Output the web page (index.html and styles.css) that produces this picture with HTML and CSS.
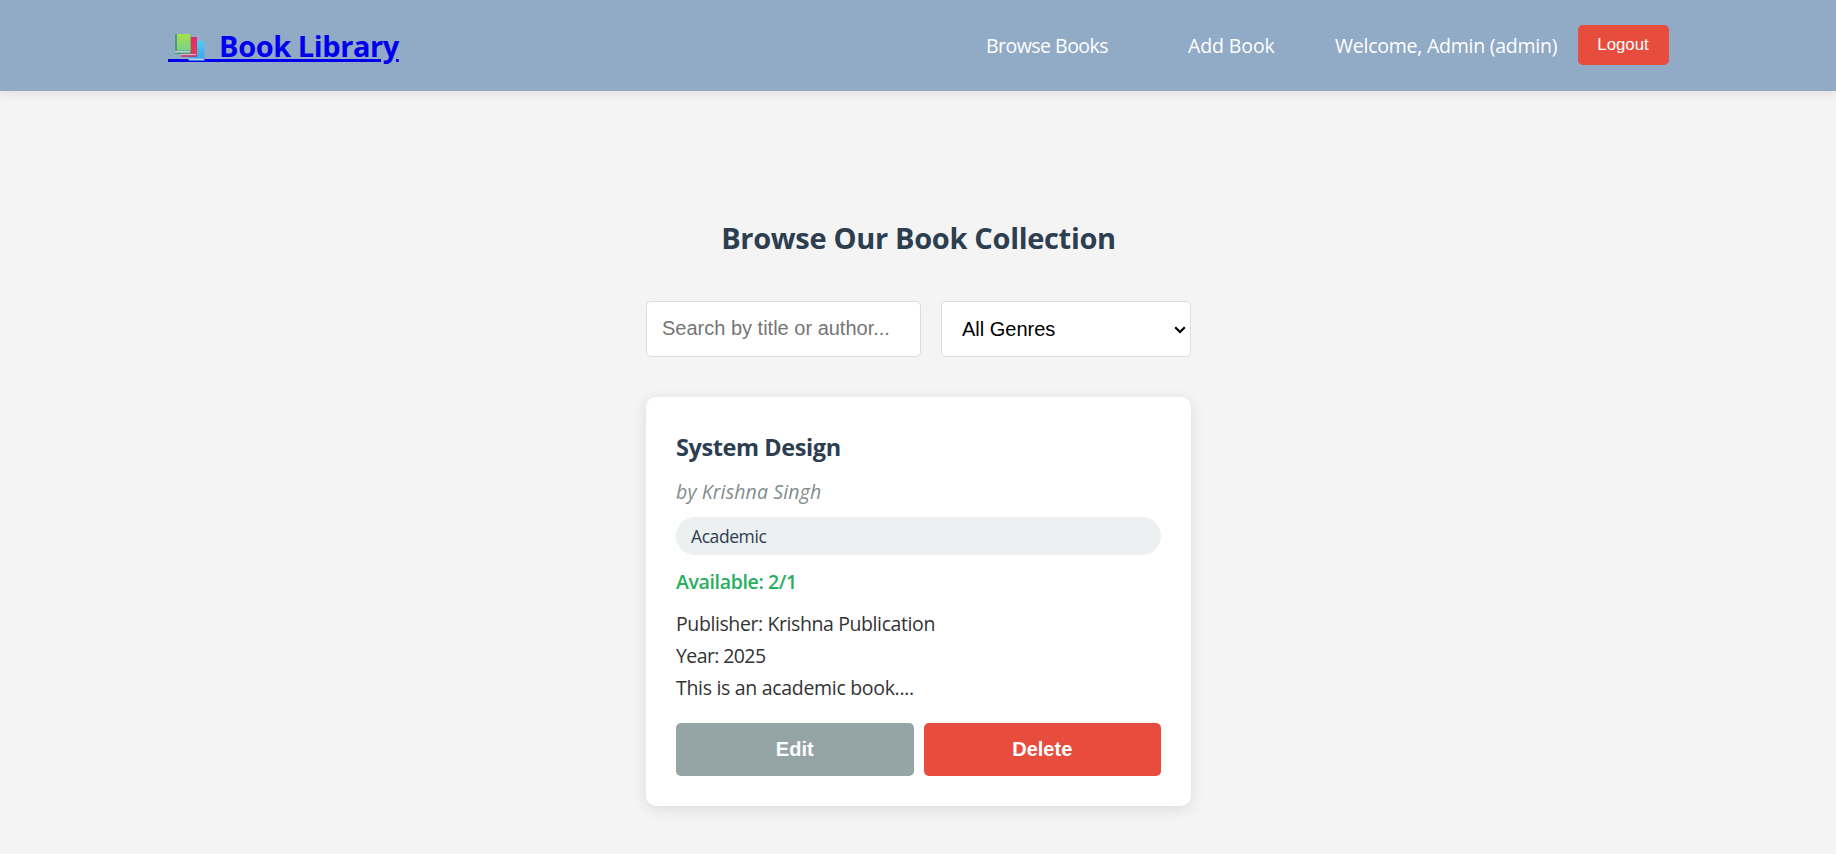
FILE: index.html
```html
<!DOCTYPE html>
<html lang="en">
<head>
<meta charset="UTF-8">
<title>Book Library</title>
<link rel="stylesheet" href="styles.css">
</head>
<body>
<header class="header">
  <div class="header-inner">
    <h1 class="logo"><a class="logo-link" href="#"><svg class="logo-icon" viewBox="0 0 44 30" aria-hidden="true">
      <defs>
        <linearGradient id="green" x2="0" y2="1"><stop stop-color="#a6e04e"/><stop offset="1" stop-color="#79d18b"/></linearGradient>
        <linearGradient id="pink" x2="0" y2="1"><stop stop-color="#e02a6c"/><stop offset="1" stop-color="#e93a50"/></linearGradient>
        <linearGradient id="blue" x2="0" y2="1"><stop stop-color="#54cbf5"/><stop offset="1" stop-color="#36a4ec"/></linearGradient>
      </defs>
      <rect y="27" width="44" height="3" fill="#00e"/>
      <rect x="21" y="9" width="15.500" height="20" fill="url(#blue)"/>
      <rect x="20.500" y="26.500" width="15" height="1.500" fill="#b9cdec"/>
      <rect x="21" y="28" width="15.500" height="1" fill="#3485cf"/>
      <rect x="13" y="5" width="16" height="19.500" fill="url(#pink)"/>
      <rect x="13" y="22" width="15" height="1.500" fill="#dcb6d3"/>
      <rect x="13.500" y="23.500" width="15.500" height="1" fill="#b3205a"/>
      <rect x="7" y="2" width="16" height="20" fill="#4b9c77"/>
      <rect x="9" y="2" width="13.500" height="16.500" fill="url(#green)"/>
      <rect x="7" y="19" width="15" height="1.500" fill="#c3cfe0"/>
    </svg><span class="logo-text">&nbsp;Book Library</span></a></h1>
    <nav class="nav">
      <a class="nav-link browse" href="#">Browse Books</a>
      <a class="nav-link add" href="#">Add Book</a>
      <div class="user"><span class="welcome">Welcome, Admin (admin)</span><button class="logout">Logout</button></div>
    </nav>
  </div>
</header>
<main class="main">
  <h2 class="title">Browse Our Book Collection</h2>
  <div class="filters">
    <input class="search" type="text" placeholder="Search by title or author...">
    <div class="genre-box">
      <select class="genre"><option>All Genres</option></select>
      <svg class="chevron" viewBox="0 0 12 8" aria-hidden="true"><path d="M1.200 1.200 6 6l4.800-4.800" fill="none" stroke="#000" stroke-width="2.200"/></svg>
    </div>
  </div>
  <article class="card">
    <h3 class="name">System Design</h3>
    <p class="author">by Krishna Singh</p>
    <p class="tag">Academic</p>
    <p class="available">Available: 2/1</p>
    <p class="publisher">Publisher: Krishna Publication</p>
    <p class="year">Year: 2025</p>
    <p class="description">This is an academic book....</p>
    <div class="actions">
      <button class="action edit">Edit</button>
      <button class="action delete">Delete</button>
    </div>
  </article>
</main>
</body>
</html>
```

FILE: styles.css
```css
* { margin: 0; padding: 0; box-sizing: border-box; }
body {
  font-family: "Open Sans", "Noto Sans", sans-serif;
  font-size: 19.5px;
  line-height: 32px;
  color: #333;
  background: #f4f4f4;
}
.header { height: 91px; background: #91aac6; box-shadow: 0 2px 10px rgba(0, 0, 0, .1); }
.header-inner { width: 1500px; height: 91px; margin: 0 auto; display: flex; justify-content: space-between; align-items: center; }
.logo { font-size: 29px; line-height: 48px; font-weight: 700; white-space: nowrap; }
.logo-link { color: #00e; text-decoration: underline; text-decoration-thickness: 3px; text-underline-offset: 2px; }
.logo-icon { width: 44px; height: 30px; vertical-align: -5px; }
.logo-text { letter-spacing: -.43px; }
.nav { display: flex; align-items: center; margin-right: -1px; }
.nav-link { color: #fff; text-decoration: none; white-space: nowrap; }
.browse { width: 202px; letter-spacing: -.52px; }
.add { width: 147px; letter-spacing: -.1px; }
.user { display: flex; align-items: center; }
.welcome { width: 243px; color: #fff; white-space: nowrap; letter-spacing: -.24px; }
.logout { width: 91px; height: 40px; margin-bottom: 2px; padding-right: 1px; border: 0; border-radius: 5px; background: #e74c3c; color: #fff; font: 16.800px "Liberation Sans", Arial, sans-serif; }
.main { width: 546px; margin: 0 auto; padding: 123px 0 48px 1px; }
.title { font-size: 29px; line-height: 48px; text-align: center; color: #2c3e50; white-space: nowrap; letter-spacing: -.32px; }
.filters { display: flex; gap: 20px; margin: 39px 0 40px; }
.search, .genre { height: 56px; border: 1px solid #ddd; border-radius: 5px; background: #fff; font: 20px "Liberation Sans", Arial, sans-serif; }
.search { width: 275px; padding: 0 15px 2px; }
.search::placeholder { color: #757575; }
.genre-box { position: relative; width: 250px; height: 56px; }
.genre { appearance: none; width: 250px; padding: 0 20px 0 20px; color: #000; }
.chevron { position: absolute; right: 5px; top: 25px; width: 12px; height: 8px; pointer-events: none; }
.card { height: 409px; padding: 30px; border-radius: 10px; background: #fff; box-shadow: 0 3px 15px rgba(0, 0, 0, .1); }
.name { padding-top: 1px; font-size: 23.5px; line-height: 38px; color: #2c3e50; margin-bottom: 10px; letter-spacing: -.42px; }
.author { color: #7f8c8d; font-style: italic; margin-bottom: 9px; letter-spacing: .13px; }
.tag { height: 38px; padding: 5px 15px; border-radius: 20px; background: #ecf0f1; color: #2c3e50; font-size: 17.500px; line-height: 28px; margin-bottom: 11px; letter-spacing: -.42px; }
.available { color: #27ae60; font-weight: 600; margin-bottom: 10px; letter-spacing: -.36px; }
.publisher { letter-spacing: -.4px; }
.year { letter-spacing: -.6px; }
.description { letter-spacing: -.31px; }
.actions { display: flex; gap: 10px; margin-top: 19px; }
.action { flex: 1; height: 53px; border: 0; border-radius: 5px; color: #fff; font: bold 20px "Liberation Sans", Arial, sans-serif; }
.edit { background: #95a5a6; }
.delete { background: #e74c3c; }
```
